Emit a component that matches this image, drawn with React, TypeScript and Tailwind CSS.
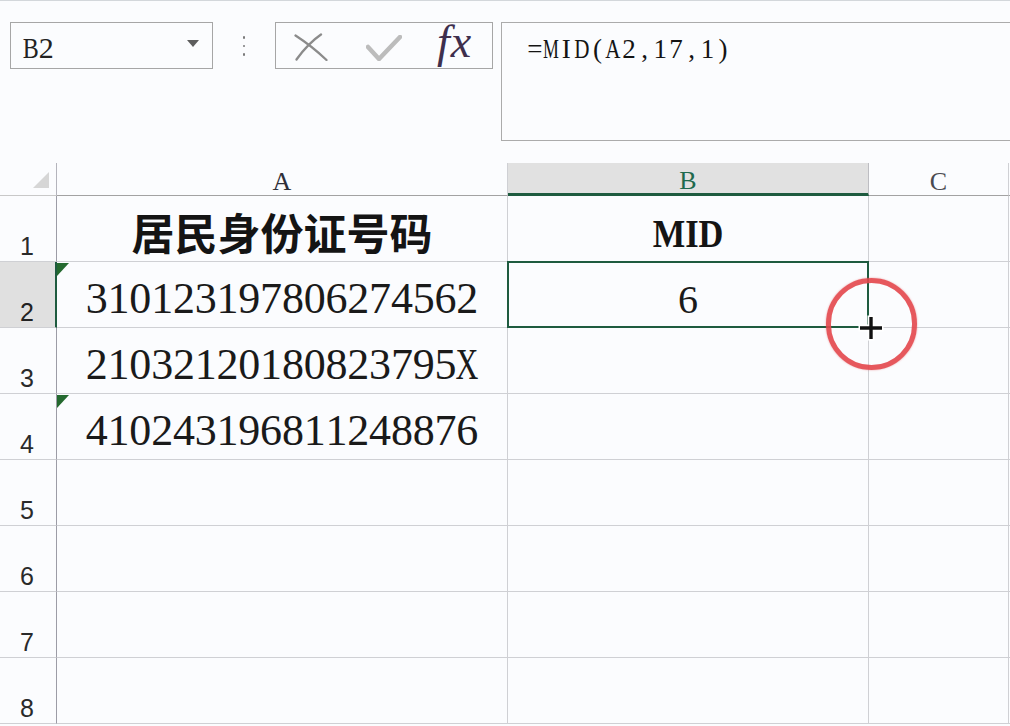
import React from "react";

type RowData = {
  n: number;
  a?: string;
  b?: string;
  head?: boolean;
  tri?: boolean;
  sel?: boolean;
};

const rows: RowData[] = [
  { n: 1, a: "居民身份证号码", b: "MID", head: true },
  { n: 2, a: "310123197806274562", b: "6", tri: true, sel: true },
  { n: 3, a: "21032120180823795X" },
  { n: 4, a: "410243196811248876", tri: true },
  { n: 5 },
  { n: 6 },
  { n: 7 },
  { n: 8 },
];

function Chars({
  text,
  cell,
  wide,
}: {
  text: string;
  cell: string;
  wide: Record<string, string>;
}) {
  return (
    <span className="inline-flex">
      {text.split("").map((c, i) => (
        <span key={i} className={`inline-flex justify-center ${cell} ${wide[c] ?? ""}`}>
          {c}
        </span>
      ))}
    </span>
  );
}

function GreenTri() {
  return (
    <svg className="absolute left-0 top-[1px]" width="12" height="13" viewBox="0 0 12 13">
      <polygon points="0,0 12,0 0,13" fill="#24692f" />
    </svg>
  );
}

export default function App() {
  return (
    <div className="relative w-[1010px] h-[726px] overflow-hidden bg-[#fbfcfe] font-['Liberation_Serif',serif] text-[#1b1b1b]">
      {/* toolbar */}
      <div className="h-[163px] border-t border-[#d3d7db] flex items-start pt-[21px] pl-[10px]">
        {/* name box */}
        <div className="w-[203px] h-[47px] shrink-0 border border-[#a6a6a6] flex justify-between">
          <span className="pl-[12px] pt-[10px] text-[30px] leading-none inline-block text-[#222] font-['Liberation_Serif',serif]">
            <Chars text="B2" cell="w-[15.5px]" wide={{ B: "scale-x-[0.8]" }} />
          </span>
          <svg className="mt-[17px] mr-[13px]" width="12" height="7" viewBox="0 0 12 7">
            <polygon points="0,0 12,0 6,7" fill="#5d5d5d" />
          </svg>
        </div>
        {/* dots */}
        <div className="w-[62px] shrink-0 flex flex-col items-center pt-[14px] gap-[6px]">
          <span className="block w-[2.5px] h-[2.5px] rounded-full bg-[#7a7a7a]" />
          <span className="block w-[2.5px] h-[2.5px] rounded-full bg-[#7a7a7a]" />
          <span className="block w-[2.5px] h-[2.5px] rounded-full bg-[#7a7a7a]" />
        </div>
        {/* buttons */}
        <div className="w-[218px] h-[47px] shrink-0 border border-[#a6a6a6] flex items-start">
          <svg className="ml-[18px] mt-[10px]" width="34" height="28" viewBox="0 0 34 28">
            <path d="M1.5 2.5 C 10 8, 21 16, 32.5 27" stroke="#8b8b8b" strokeWidth="2.3" fill="none" strokeLinecap="round" />
            <path d="M27 1.5 C 19 7, 10 16, 2.5 26.5" stroke="#8b8b8b" strokeWidth="2.3" fill="none" strokeLinecap="round" />
          </svg>
          <svg className="ml-[38px] mt-[12px]" width="36" height="26" viewBox="0 0 36 26">
            <path d="M2 12 L13 24 L34 2" stroke="#bcbcbc" strokeWidth="4.5" fill="none" strokeLinecap="round" strokeLinejoin="round" />
          </svg>
          <span className="ml-[35px] -mt-[4px] text-[46px] leading-none italic text-[#3e2f4d] tracking-[1px]">
            fx
          </span>
        </div>
        {/* formula */}
        <div className="ml-[8px] w-[530px] h-[119px] shrink-0 border border-[#ababab] pl-[25px] pt-[13px] text-[27px] leading-none text-[#141414]">
          <Chars
            text="=MID(A2,17,1)"
            cell="w-[15.7px]"
            wide={{ M: "scale-x-[0.66]", A: "scale-x-[0.78]", D: "scale-x-[0.78]" }}
          />
        </div>
      </div>

      {/* grid */}
      <div className="grid grid-cols-[57px_451px_361px_140px_1px] grid-rows-[33px_repeat(8,66px)]">
        {/* header row */}
        <div className="border-r border-b border-r-[#b4b4bc] border-b-[#c8c8c8] flex justify-end items-end pr-[7px] pb-[7px]">
          <svg width="16" height="16" viewBox="0 0 16 16">
            <polygon points="16,0 16,16 0,16" fill="#d6d6d6" />
          </svg>
        </div>
        <div className="border-r border-b border-r-[#cfd0d4] border-b-[#a2a2a2] flex items-center justify-center pt-[5px] text-[26px] leading-none text-[#2f2f38]">
          A
        </div>
        <div className="bg-[#e1e1e1] border-r border-r-[#bdbdc2] border-b-[3px] border-b-[#1e5b3f] flex items-center justify-center pt-[6px] text-[26px] leading-none text-[#1f6a4d]">
          B
        </div>
        <div className="border-r border-b border-r-[#cfd0d4] border-b-[#a2a2a2] flex items-center justify-center pt-[5px] text-[26px] leading-none text-[#4a4a50]">
          C
        </div>
        <div className="border-b border-b-[#a2a2a2]" />

        {rows.map((r) => (
          <React.Fragment key={r.n}>
            <div
              className={
                r.sel
                  ? "bg-[#e0e0e0] border-r-2 border-r-[#1e5b3f] border-b border-b-[#cfd0d4] flex items-end pl-[20px] pb-[2px] text-[25px] leading-none font-['Liberation_Sans',sans-serif] text-[#222]"
                  : "border-r border-r-[#9c9ca6] border-b border-b-[#cfd0d4] flex items-end pl-[20px] pb-[2px] text-[25px] leading-none font-['Liberation_Sans',sans-serif] text-[#2a2a2a]"
              }
            >
              {r.n}
            </div>
            <div className="relative border-r border-b border-[#cfd0d4] flex items-center justify-center pt-[9px] leading-none">
              {r.tri && <GreenTri />}
              {r.head ? (
                <span className="font-['Noto_Sans_CJK_SC',sans-serif] font-bold text-[43px] leading-none text-[#141414] -mt-[3px]">
                  {r.a}
                </span>
              ) : r.a ? (
                <span className="text-[44px] leading-none text-[#1a1a1a]">
                  <Chars text={r.a} cell="w-[21.8px]" wide={{ X: "scale-x-[0.72]" }} />
                </span>
              ) : null}
            </div>
            <div className="relative border-r border-b border-[#cfd0d4] flex items-center justify-center pt-[10px] leading-none">
              {r.head ? (
                <span className="inline-block font-bold text-[40px] leading-none scale-x-[0.86] text-[#141414]">
                  {r.b}
                </span>
              ) : r.b ? (
                <span className="text-[40px] leading-none text-[#1a1a1a]">{r.b}</span>
              ) : null}
              {r.sel && <div className="absolute -inset-[1px] border-2 border-[#1e5b3f]" />}
            </div>
            <div className="border-r border-b border-[#cfd0d4]" />
            <div className="border-b border-[#cfd0d4]" />
          </React.Fragment>
        ))}
      </div>

      {/* fill-handle cursor */}
      <svg className="absolute left-[858px] top-[315px]" width="26" height="26" viewBox="0 0 26 26">
        <path d="M13 0.5 V25.5 M0.5 13 H25.5" stroke="#ffffff" strokeWidth="7" />
        <path d="M13 2 V24 M2 13 H24" stroke="#111111" strokeWidth="3.4" />
      </svg>
      {/* red highlight circle */}
      <div className="absolute left-[826px] top-[278px] w-[91px] h-[92px] rounded-full border-[5px] border-[#e4474c] opacity-90 shadow-[0_0_2px_rgba(228,71,76,0.6)]" />
    </div>
  );
}
